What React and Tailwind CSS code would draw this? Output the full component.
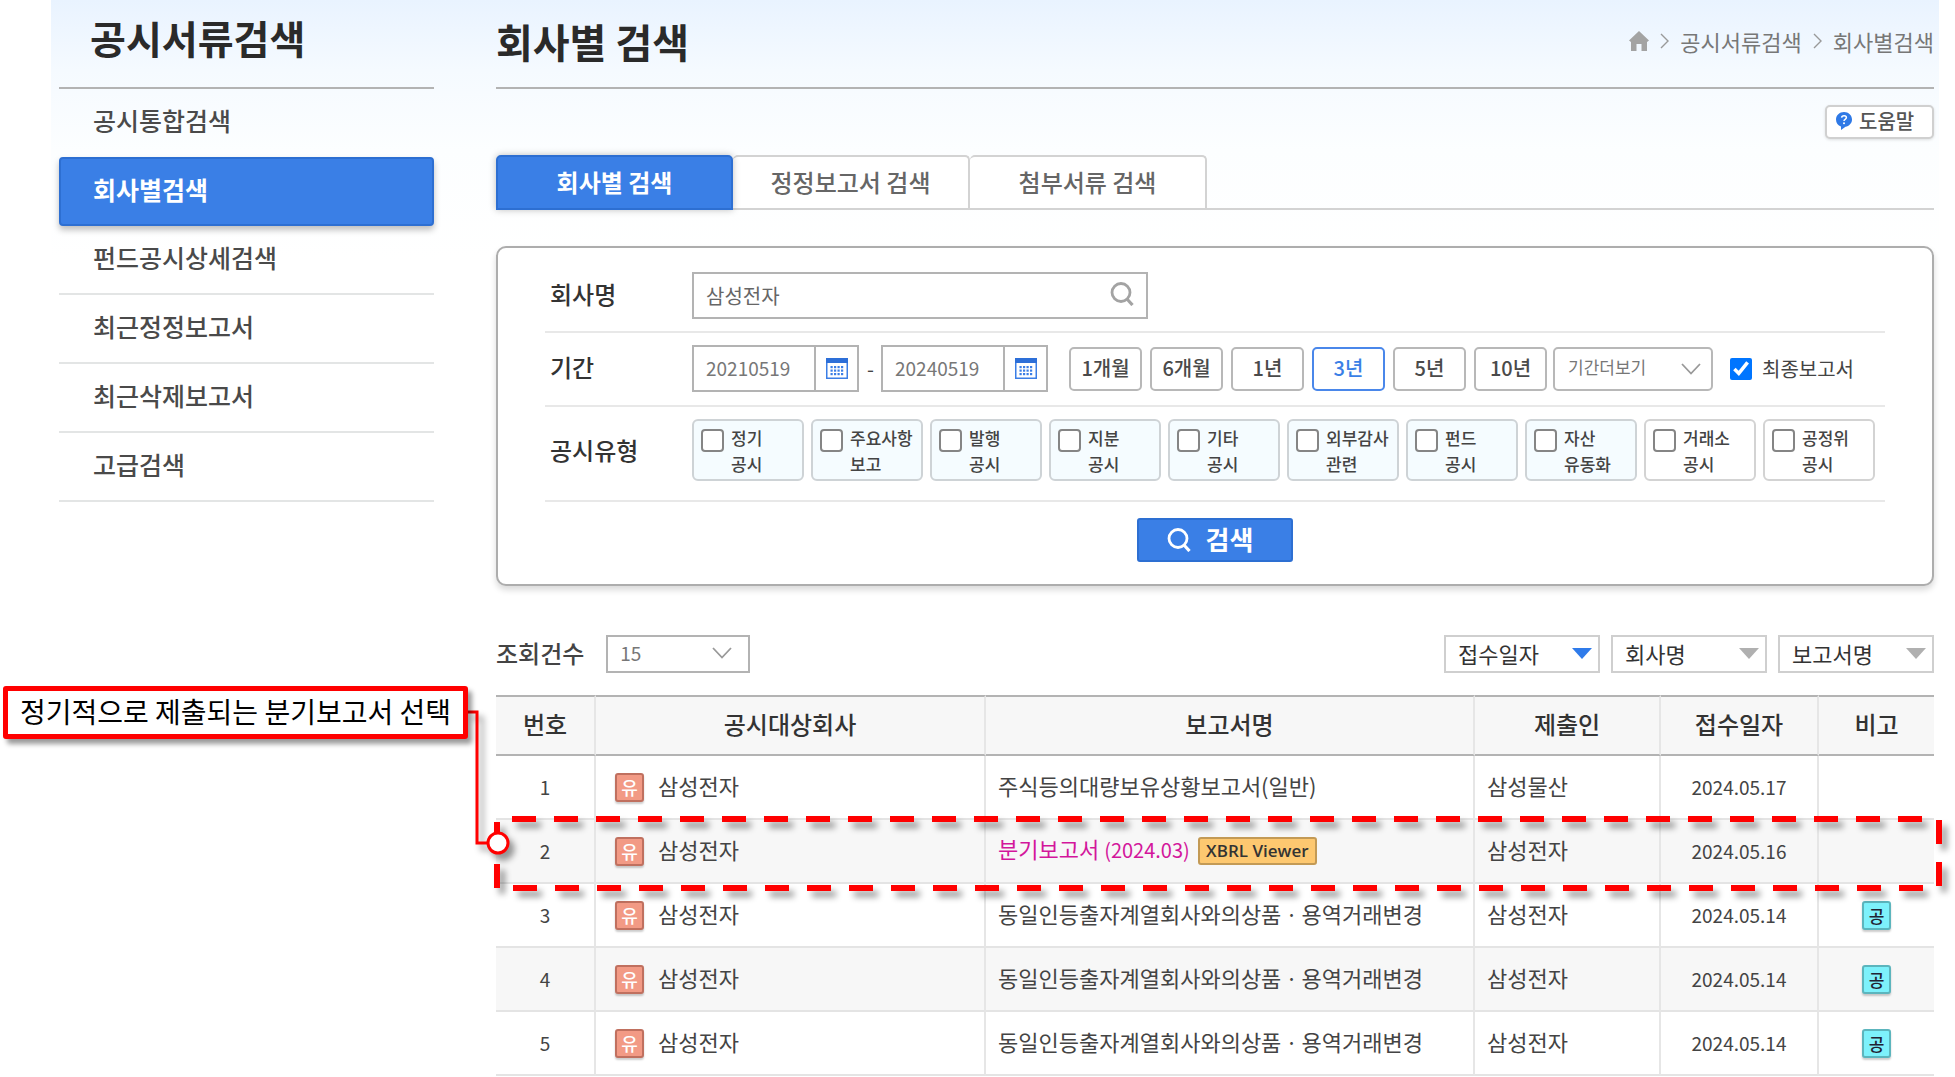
const menu = ['공시통합검색', '회사별검색', '펀드공시상세검색', '최근정정보고서', '최근삭제보고서', '고급검색'];

const tabs = ['회사별 검색', '정정보고서 검색', '첨부서류 검색'];

const periods = ['1개월', '6개월', '1년', '3년', '5년', '10년'];

const types = [
  ['정기', '공시', true],
  ['주요사항', '보고', true],
  ['발행', '공시', true],
  ['지분', '공시', true],
  ['기타', '공시', true],
  ['외부감사', '관련', true],
  ['펀드', '공시', true],
  ['자산', '유동화', true],
  ['거래소', '공시', false],
  ['공정위', '공시', false],
];

const rows = [
  { no: 1, report: '주식등의대량보유상황보고서(일반)', by: '삼성물산', date: '2024.05.17' },
  { no: 2, report: '분기보고서', term: '(2024.03)', by: '삼성전자', date: '2024.05.16', marked: true },
  { no: 3, report: '동일인등출자계열회사와의상품ㆍ용역거래변경', by: '삼성전자', date: '2024.05.14', note: '공' },
  { no: 4, report: '동일인등출자계열회사와의상품ㆍ용역거래변경', by: '삼성전자', date: '2024.05.14', note: '공' },
  { no: 5, report: '동일인등출자계열회사와의상품ㆍ용역거래변경', by: '삼성전자', date: '2024.05.14', note: '공' },
];

function Magnifier({ className }) {
  return (
    <svg viewBox="0 0 24 24" fill="none" stroke="currentColor" className={className} aria-hidden="true">
      <circle cx="11" cy="10.5" r="9" strokeWidth="2.8" />
      <path d="M16.5 16.5 L22.5 23" strokeWidth="3.2" />
    </svg>
  );
}

function Chevron({ className }) {
  return (
    <svg viewBox="0 0 20 12" fill="none" stroke="#999" strokeWidth="1.8" className={className} aria-hidden="true">
      <path d="M1 1 L10 10.5 L19 1" />
    </svg>
  );
}

function Separator() {
  return (
    <svg viewBox="0 0 9 16" fill="none" stroke="#999" strokeWidth="1.4" className="h-4 w-[9px]" aria-hidden="true">
      <path d="M1 1 L8 8 L1 15" />
    </svg>
  );
}

function DateField({ label, value }) {
  return (
    <div className="flex h-[47px] w-[167px] border-2 border-[#b3b3b3] bg-white">
      <input
        aria-label={label}
        defaultValue={value}
        className="min-w-0 flex-1 pl-3 text-[19px] text-[#777] outline-none"
      />
      <button type="button" aria-label={`${label} 달력`} className="flex w-[43px] items-center justify-center border-l-2 border-[#b3b3b3]">
        <svg viewBox="0 0 22 21" className="h-[21px] w-[22px]" aria-hidden="true">
          <rect x="0.75" y="0.75" width="20.5" height="19.5" fill="#fff" stroke="#3b7ee6" strokeWidth="1.5" />
          <rect width="22" height="5" fill="#2d6fd8" />
          {[8, 11.5, 15].map((y) =>
            [4.5, 8, 11.5, 15].map((x) => <rect key={`${x}-${y}`} x={x} y={y} width="2.2" height="2.2" fill="#3b7ee6" />)
          )}
        </svg>
      </button>
    </div>
  );
}

function Sidebar() {
  return (
    <aside className="w-[375px] shrink-0">
      <h2 className="flex h-[89px] items-center border-b-2 border-[#b3b3b3] pb-3 pl-[31px] text-[39px] font-bold text-[#2a2a2a]">
        공시서류검색
      </h2>
      <nav>
        {menu.map((name, i) =>
          i === 1 ? (
            <a
              key={name}
              href="#"
              aria-current="page"
              className="flex h-[69px] items-center rounded-[4px] border-2 border-[#2d6fd2] bg-[#3a7fe6] pb-1 pl-8 text-[25px] font-bold text-white shadow-[0_4px_6px_rgba(0,0,0,0.25)]"
            >
              {name}
            </a>
          ) : (
            <a
              key={name}
              href="#"
              className={
                i === 0
                  ? 'flex h-[68px] items-center pb-1 pl-[34px] text-[25px] font-medium text-[#4a4a4a]'
                  : 'flex h-[69px] items-center border-b-2 border-[#e3e5e5] pb-1 pl-[34px] text-[25px] font-medium text-[#4a4a4a]'
              }
            >
              {name}
            </a>
          )
        )}
      </nav>
    </aside>
  );
}

function SearchPanel() {
  return (
    <form
      onSubmit={(e) => e.preventDefault()}
      className="mt-9 rounded-[10px] border-2 border-[#adadad] bg-white px-[47px] pt-3 pb-[22px] shadow-[0_4px_6px_rgba(0,0,0,0.15)]"
    >
      <div className="flex items-center border-b-2 border-[#e8e8e8] py-3">
        <label htmlFor="company" className="w-[147px] shrink-0 pb-1 pl-[5px] text-[24px] font-medium text-[#333]">
          회사명
        </label>
        <div className="flex h-[47px] w-[456px] items-center border-2 border-[#b3b3b3] bg-white pr-3">
          <input
            id="company"
            defaultValue="삼성전자"
            className="min-w-0 flex-1 pl-3 text-[20px] text-[#666] outline-none"
          />
          <button type="button" aria-label="회사명 찾기" className="pb-1 text-[#a3a3a3]">
            <Magnifier className="size-6" />
          </button>
        </div>
      </div>

      <div className="flex items-center border-b-2 border-[#e8e8e8] pt-3 pb-[13px]">
        <span className="w-[147px] shrink-0 pb-1 pl-[5px] text-[24px] font-medium text-[#333]">기간</span>
        <div className="flex items-center gap-2">
          <DateField label="시작일" value="20210519" />
          <span className="w-[6px] text-center text-[20px] text-[#444]">-</span>
          <DateField label="종료일" value="20240519" />
        </div>
        <div className="ml-[21px] flex gap-2">
          {periods.map((p) => (
            <button
              key={p}
              type="button"
              className={
                p === '3년'
                  ? 'h-11 w-[73px] rounded-[5px] border-2 border-[#4a87ea] bg-white pb-[2px] text-[20px] font-medium whitespace-nowrap text-[#3a7fe6]'
                  : 'h-11 w-[73px] rounded-[5px] border-2 border-[#b8b8b8] bg-white pb-[2px] text-[20px] font-medium whitespace-nowrap text-[#4a4a4a]'
              }
            >
              {p}
            </button>
          ))}
        </div>
        <div className="relative ml-1.5">
          <select
            aria-label="기간더보기"
            className="block h-11 w-40 appearance-none rounded-[5px] border-2 border-[#b8b8b8] bg-white pb-1 pl-[13px] text-[17px] text-[#777]"
          >
            <option>기간더보기</option>
          </select>
          <Chevron className="pointer-events-none absolute top-4 right-3 h-3 w-5" />
        </div>
        <label className="ml-[17px] flex items-center gap-[10px] text-[20px] whitespace-nowrap text-[#444]">
          <input type="checkbox" defaultChecked className="size-[22px] accent-[#0075ff]" />
          최종보고서
        </label>
      </div>

      <div className="flex items-center border-b-2 border-[#e8e8e8] pt-3 pb-[19px]">
        <span className="w-[147px] shrink-0 pl-[5px] text-[24px] font-medium text-[#333]">공시유형</span>
        <div className="flex gap-[7px]">
          {types.map(([a, b, tinted]) => (
            <label
              key={a}
              className={
                tinted
                  ? 'flex h-[62px] w-[112px] gap-[7px] rounded-[6px] border-2 border-[#ced3d6] bg-[#f5fcff] pt-1 pl-[7px] text-[17px] leading-[26px] font-medium whitespace-nowrap text-[#444]'
                  : 'flex h-[62px] w-[112px] gap-[7px] rounded-[6px] border-2 border-[#d3d3d3] bg-white pt-1 pl-[7px] text-[17px] leading-[26px] font-medium whitespace-nowrap text-[#444]'
              }
            >
              <input
                type="checkbox"
                className="mt-1 size-[23px] shrink-0 appearance-none rounded-[4px] border-2 border-[#858585] bg-white checked:appearance-auto"
              />
              <span>
                {a}
                <br />
                {b}
              </span>
            </label>
          ))}
        </div>
      </div>

      <div className="mt-4 flex justify-center">
        <button className="flex h-11 w-[156px] items-center justify-center gap-[15px] rounded-[3px] border-2 border-[#2d6fd2] bg-[#3a7fe6] pr-[10px] text-[26px] font-bold text-white">
          <Magnifier className="size-6" />
          <span className="pb-[2px] leading-8">검색</span>
        </button>
      </div>
    </form>
  );
}

function SortButton({ name, active }) {
  return (
    <button className="flex h-[38px] w-[156px] items-center justify-between border-2 border-[#cfcfcf] bg-white pr-[6px] pb-[2px] pl-3 text-[22px] leading-8 text-[#333]">
      {name}
      <svg viewBox="0 0 20 11" className={active ? 'h-[11px] w-5 text-[#2f7bea]' : 'h-[11px] w-5 text-[#b0b0b0]'} aria-hidden="true">
        <path d="M0 0 H20 L10 11 Z" fill="currentColor" />
      </svg>
    </button>
  );
}

/* Dashed frame round the highlighted row, with its callout and connector. */
function RowCallout() {
  return (
    <>
      <svg className="pointer-events-none absolute inset-0 z-10 h-full w-[calc(100%+5px)] overflow-visible drop-shadow-[5px_6px_3px_rgba(0,0,0,0.4)]" aria-hidden="true">
        <g stroke="#f00" strokeWidth="6" strokeDasharray="24 18">
          <line x1="16" y1="-1" x2="99.3%" y2="-1" />
          <line x1="17" y1="68" x2="99.3%" y2="68" />
          <line x1="1" y1="2" x2="1" y2="68" />
          <line x1="100%" y1="0" x2="100%" y2="66" />
        </g>
        <path d="M-29 -108 H-19 V23 H-6" fill="none" stroke="#f00" strokeWidth="3" />
        <circle cx="2" cy="23" r="10" fill="#fff" stroke="#f00" strokeWidth="3" />
      </svg>
      <span className="absolute -top-[134px] right-[calc(100%+28px)] z-10 flex h-[53px] items-center rounded-[3px] border-[5px] border-[#f00] bg-white px-3 pb-1 text-[28px] whitespace-nowrap text-black shadow-[4px_5px_5px_rgba(0,0,0,0.4)]">
        정기적으로 제출되는 분기보고서 선택
      </span>
    </>
  );
}

function Results() {
  const th = 'h-[61px] border-y-2 border-y-[#b3b3b3] pb-1 text-[24px] font-medium border-r-2 border-r-[#e6e6e6] last:border-r-0';
  const td = 'h-16 border-b-2 border-b-[#e4e4e4] border-r-2 border-r-[#e6e6e6] last:border-r-0';
  return (
    <section>
      <div className="mt-[49px] flex items-center">
        <label htmlFor="count" className="pb-[2px] text-[24px] leading-8 font-medium text-[#444]">
          조회건수
        </label>
        <div className="relative ml-[22px]">
          <select
            id="count"
            className="block h-[38px] w-36 appearance-none border-2 border-[#b3b3b3] bg-white pb-[2px] pl-3 text-[19px] text-[#777]"
          >
            <option>15</option>
          </select>
          <Chevron className="pointer-events-none absolute top-3 right-[18px] h-3 w-5" />
        </div>
        <div className="ml-auto flex gap-[11px]">
          <SortButton name="접수일자" active />
          <SortButton name="회사명" />
          <SortButton name="보고서명" />
        </div>
      </div>

      <table className="mt-[22px] w-full table-fixed border-separate border-spacing-0 text-[#444]">
        <colgroup>
          <col className="w-[100px]" />
          <col className="w-[390px]" />
          <col />
          <col className="w-[186px]" />
          <col className="w-[158px]" />
          <col className="w-[115px]" />
        </colgroup>
        <thead className="bg-[#f7f7f7] text-[#333]">
          <tr>
            {['번호', '공시대상회사', '보고서명', '제출인', '접수일자', '비고'].map((h) => (
              <th key={h} className={th}>
                {h}
              </th>
            ))}
          </tr>
        </thead>
        <tbody className="text-[22px]">
          {rows.map((r) => (
            <tr key={r.no} className="relative even:bg-[#f7f7f7]">
              <td className={`${td} text-center text-[19px]`}>
                {r.no}
                {r.marked && <RowCallout />}
              </td>
              <td className={td}>
                <div className="flex items-center gap-[14px] pl-[19px]">
                  <span className="flex size-[29px] items-center justify-center rounded-[3px] border-2 border-[#c0705f] bg-[#f29a85] text-[18px] leading-none font-medium text-white shadow-[0_2px_2px_rgba(0,0,0,0.2)]">
                    유
                  </span>
                  <a href="#" className="pb-1 leading-8">삼성전자</a>
                </div>
              </td>
              <td className={td}>
                <div className="flex items-center gap-2 pl-3 whitespace-nowrap">
                  {r.term ? (
                    <>
                      <a href="#" className="pb-1 leading-8 text-[#d3169b]">
                        {r.report} <span className="text-[20px]">{r.term}</span>
                      </a>
                      <button className="flex h-7 w-[119px] items-center justify-center rounded-[3px] border-2 border-[#c39a55] bg-[#fdc870] font-['Open_Sans'] text-[17px] leading-6 font-semibold text-[#333]">
                        XBRL Viewer
                      </button>
                    </>
                  ) : (
                    <a href="#" className="pb-1 leading-8">{r.report}</a>
                  )}
                </div>
              </td>
              <td className={td}>
                <a href="#" className="block pb-1 pl-3 leading-8">{r.by}</a>
              </td>
              <td className={`${td} text-center text-[19px]`}>{r.date}</td>
              <td className={td}>
                {r.note && (
                  <span className="mx-auto flex size-[29px] items-center justify-center rounded-[3px] border-2 border-[#5cb5bd] bg-[#7df1fb] text-[17px] leading-none font-medium text-[#223] shadow-[0_2px_2px_rgba(0,0,0,0.2)]">
                    {r.note}
                  </span>
                )}
              </td>
            </tr>
          ))}
        </tbody>
      </table>
    </section>
  );
}

export default function App() {
  return (
    <div className="bg-white pr-4 pl-[51px] font-['Noto_Sans_CJK_KR',sans-serif]">
      <div className="flex gap-[62px] bg-[linear-gradient(to_bottom,#e9f3ff_0px,#f5faff_70px,#fcfeff_150px,#ffffff_260px)] pr-[5px] pl-2">
        <Sidebar />
        <main className="min-w-0 flex-1">
          <header className="flex h-[89px] items-center justify-between border-b-2 border-[#b3b3b3] pb-[5px]">
            <h1 className="text-[40px] leading-[60px] font-bold text-[#2a2a2a]">회사별 검색</h1>
            <nav aria-label="위치" className="flex items-center gap-[11px] text-[22px] text-[#777]">
              <a href="#" aria-label="홈">
                <svg viewBox="0 0 20 20" className="size-5" aria-hidden="true">
                  <path d="M10 0 L20 9.5 L18 11 V20 H12.5 V13 H7.5 V20 H2 V11 L0 9.5 Z" fill="#a3a3a3" />
                </svg>
              </a>
              <Separator />
              <a href="#">공시서류검색</a>
              <Separator />
              <a href="#">회사별검색</a>
            </nav>
          </header>

          <div className="mt-4 flex justify-end">
            <button className="flex h-[34px] w-[109px] items-center gap-[7px] rounded-[5px] border-2 border-[#d0d0d0] bg-white pb-[2px] pl-[9px] text-[20px] leading-7 font-medium text-[#555] shadow-[0_1px_3px_rgba(0,0,0,0.12)]">
              <svg viewBox="0 0 16 18" className="h-[18px] w-4" aria-hidden="true">
                <path d="M8 0 C12.5 0 16 3.2 16 7.5 C16 11.5 13 14 9.5 14.8 L5 18 L5 14.5 C2 13.5 0 11 0 7.5 C0 3.2 3.5 0 8 0 Z" fill="#2f79e6" />
                <path d="M5.6 5.6 C5.8 3 10.4 3 10.4 5.6 C10.4 7.4 8 7.3 8 9" fill="none" stroke="#fff" strokeWidth="1.5" />
                <circle cx="8" cy="11.2" r="1" fill="#fff" />
              </svg>
              도움말
            </button>
          </div>

          <div role="tablist" className="mt-4 flex h-[55px] border-b-2 border-[#d3d3d3]">
            {tabs.map((t, i) => (
              <button
                key={t}
                role="tab"
                aria-selected={i === 0}
                className={
                  i === 0
                    ? 'z-10 h-[55px] w-[237px] rounded-t-[5px] border-2 border-[#2d6fd2] bg-[#3a7fe6] pb-[2px] text-[24px] font-bold text-white shadow-[0_0_7px_rgba(0,0,0,0.25)]'
                    : 'h-[53px] w-[237px] rounded-t-[5px] border-t-2 border-r-2 border-[#d3d3d3] bg-white pb-[2px] text-[24px] font-medium text-[#666]'
                }
              >
                {t}
              </button>
            ))}
          </div>

          <SearchPanel />
          <Results />
        </main>
      </div>
    </div>
  );
}
